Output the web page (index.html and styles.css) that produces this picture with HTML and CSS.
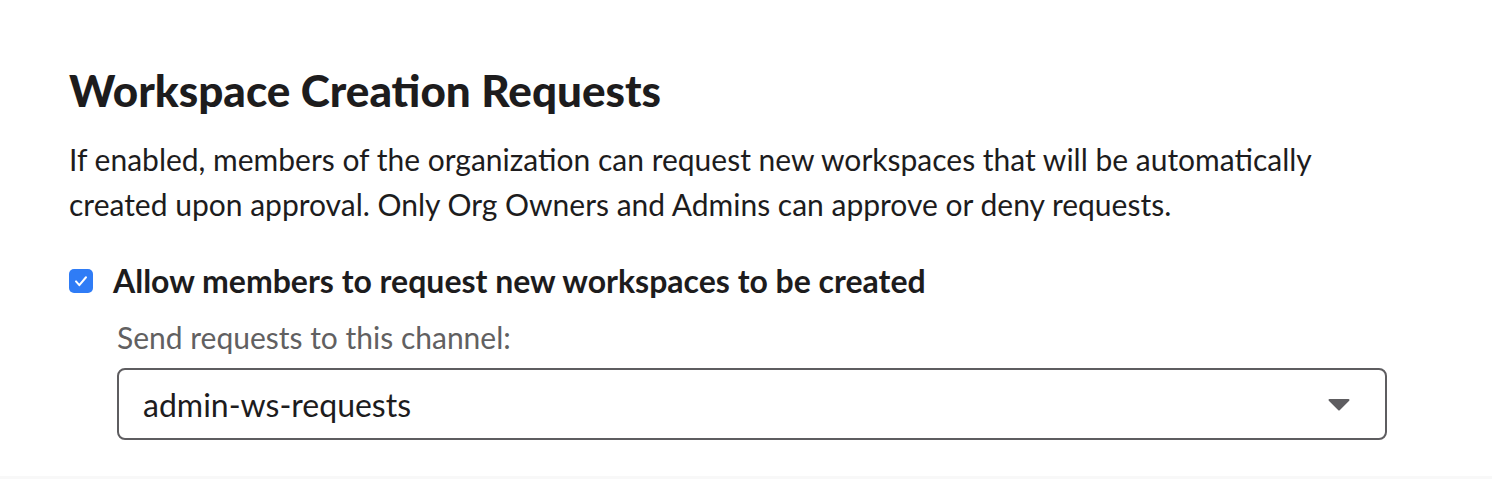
FILE: index.html
```html
<!DOCTYPE html>
<html lang="en">
<head>
    <meta charset="UTF-8">
    <meta name="viewport" content="width=device-width, initial-scale=1.0">
    <title>Workspace Creation Requests</title>
    <link rel="stylesheet" href="styles.css">
</head>
<body>
    <section class="setting">
        <h2 class="setting-title">Workspace Creation Requests</h2>
        <p class="setting-desc">If enabled, members of the organization can request new workspaces that will be automatically created upon approval. Only Org Owners and Admins can approve or deny requests.</p>

        <label class="check-row">
            <input type="checkbox" class="check-input" checked>
            <span class="check-box">
                <svg viewBox="0 0 24 24" width="20" height="20"><path d="M6 12.5l4 4.5L18 7.5" fill="none" stroke="#fff" stroke-width="2.4" stroke-linecap="round" stroke-linejoin="round"/></svg>
            </span>
            <span class="check-label">Allow members to request new workspaces to be created</span>
        </label>

        <div class="channel-field">
            <div class="field-label">Send requests to this channel:</div>
            <div class="select-box">
                <span class="select-value">admin-ws-requests</span>
                <svg class="select-caret" viewBox="0 0 22 13" width="22" height="13"><path d="M1.5 1h19a1 1 0 0 1 .7 1.7l-9.5 9.5a1 1 0 0 1-1.4 0L.8 2.7A1 1 0 0 1 1.5 1z" fill="#5e5d60"/></svg>
            </div>
        </div>
    </section>
</body>
</html>
```

FILE: styles.css
```css
body {
    margin: 0;
    font-family: Lato, "Noto Sans", sans-serif;
    color: #1d1c1d;
    background: #fff;
}
.setting {
    height: 479px;
    box-sizing: border-box;
    padding: 65px 0 0 69px;
    border-bottom: 3px solid #f8f8f8;
}
.setting-title {
    margin: 0;
    font-size: 44px;
    font-weight: 900;
    line-height: 50px;
}
.setting-desc {
    margin: 22px 0 0;
    width: 1270px;
    font-size: 30px;
    line-height: 45px;
}
.check-row {
    display: flex;
    align-items: center;
    margin-top: 34px;
    cursor: pointer;
}
.check-input {
    display: none;
}
.check-box {
    width: 24px;
    height: 24px;
    border-radius: 5px;
    background: #2f7cf6;
    display: flex;
    align-items: center;
    justify-content: center;
    flex-shrink: 0;
}
.check-label {
    margin-left: 20px;
    font-size: 32px;
    font-weight: 700;
    line-height: 40px;
}
.channel-field {
    margin-left: 48px;
    width: 1270px;
}
.field-label {
    margin-top: 18px;
    font-size: 30px;
    line-height: 36px;
    color: #616061;
}
.select-box {
    margin-top: 13px;
    height: 72px;
    box-sizing: border-box;
    border: 2px solid #5e5d60;
    border-radius: 8px;
    display: flex;
    align-items: center;
    justify-content: space-between;
    padding: 0 35px 0 24px;
}
.select-value {
    font-size: 32px;
}
```
